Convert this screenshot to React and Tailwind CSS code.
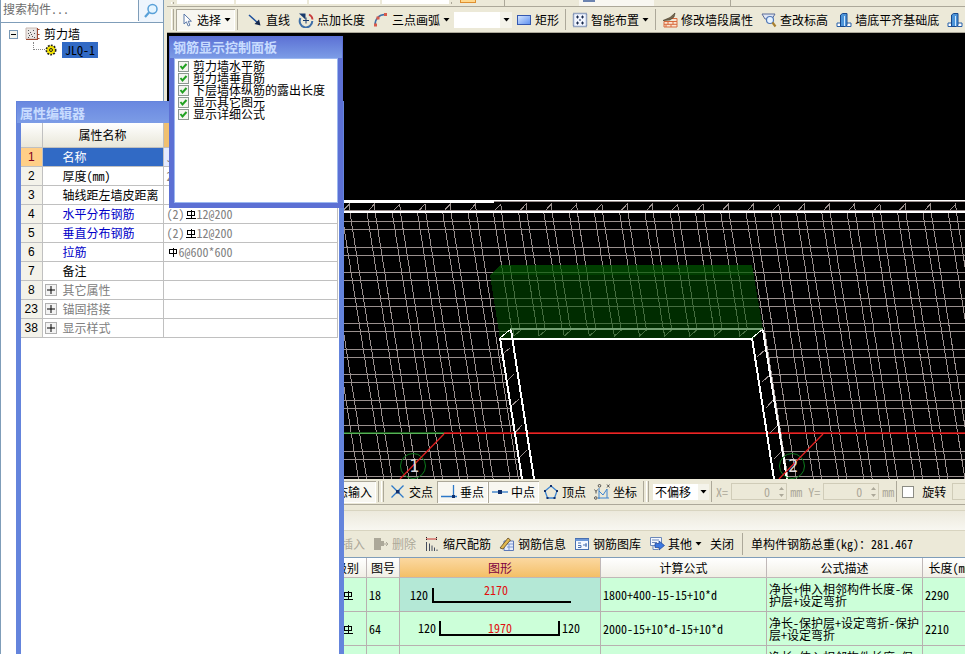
import { useState } from "react";

const GRID = "#9a908e";
const STEP = 25.27;

const range = (from, to) => Array.from({ length: to - from }, (_, i) => from + i);

const Icon = ({ children, size = 16 }) => (
    <svg width={size} height="16" viewBox={`0 0 ${size} 16`} className="shrink-0" fill="none" aria-hidden="true">
        {children}
    </svg>
);

const Arrow = () => (
    <svg width="7" height="4" viewBox="0 0 7 4" className="shrink-0" aria-hidden="true">
        <path d="M0.5 0h6l-3 3.5z" fill="#000" />
    </svg>
);

const Separator = () => <div className="w-px shrink-0 self-stretch bg-[#aca899] my-0.5 mx-0.5" />;

const Grip = () => <div className="w-[3px] shrink-0 self-stretch border-l border-[#fff] border-r border-r-[#aca899] my-0.5" />;

const ToolButton = ({ icon, label, arrow, pressed, disabled }) => (
    <button
        type="button"
        disabled={disabled}
        className={
            "flex h-[22px] shrink-0 items-center gap-[3px] px-1 whitespace-nowrap " +
            (pressed ? "bg-[#f8f7f1] shadow-[inset_1px_1px_0_#aca899,inset_-1px_-1px_0_#fff] " : "") +
            (disabled ? "text-[#aca899]" : "text-black")
        }
    >
        {icon}
        {label}
        {arrow && <Arrow />}
    </button>
);

/* ---------- icons ---------- */

const PointerIcon = () => (
    <Icon size={14}>
        <path d="M4 2v10l2.4-2.2L8.2 14l1.7-.8L8.200 9.200h3.200z" fill="#fff" stroke="#5a78a8" />
    </Icon>
);
const LineIcon = () => (
    <Icon>
        <path d="M2 3L12 12" stroke="#1c4f9c" strokeWidth="1.5" />
        <path d="M13.500 13.500l-6-1.500 4.500-4.500z" fill="#16284c" />
    </Icon>
);
const RotateIcon = () => (
    <Icon>
        <path d="M2.500 6A6.300 6.300 0 1 0 14.300 9" stroke="#3d6ea8" strokeWidth="2" />
        <path d="M11 2.500a6 6 0 0 1 3.500 5" stroke="#c83c3c" strokeWidth="1.800" />
        <path d="M1 1.500h6.500v6z" fill="#183a6c" />
        <path d="M8 5.500v6M5 8.500h6" stroke="#183a6c" />
    </Icon>
);
const ArcIcon = () => (
    <Icon>
        <path d="M2 13C2 7 6 2.500 12 2.500" stroke="#3f6fa8" strokeWidth="1.500" />
        <path d="M1 11.500h3v3H1zM3.500 4.500h3v3h-3zM11 1h3v3h-3z" fill="#d85a4c" />
    </Icon>
);
const RectIcon = () => (
    <Icon>
        <defs>
            <linearGradient id="rectFill" x1="0" y1="0" x2="1" y2="1">
                <stop offset="0" stopColor="#d8e8ff" />
                <stop offset="1" stopColor="#5c8ff0" />
            </linearGradient>
        </defs>
        <rect x="1.500" y="3.500" width="13" height="9" fill="url(#rectFill)" stroke="#3458b0" />
    </Icon>
);
const LayoutIcon = () => (
    <Icon>
        <rect x="1.500" y="1.500" width="13" height="13" fill="#f2f6ff" stroke="#3c5c98" strokeWidth="1.500" strokeDasharray="1 1" />
        <path d="M5.500 3.500v3M4 5h3M10.500 3.500v3M9 5h3M5.500 9.500v3M4 11h3M10.500 9.500v3M9 11h3M8 7v2" stroke="#16284c" />
    </Icon>
);
const BrickIcon = () => (
    <Icon>
        <path d="M2 9.500h13v5.500H2zM2 12.300h13M6 9.500v3M11 9.500v3M4 12.500v2.500M9 12.500v2.500M8 6.500h7v3" stroke="#d86a3c" fill="#fbe3d0" />
        <path d="M1 8.500l7-3 5-4.500-1 4-4 3z" fill="#7a6a50" stroke="#3c3424" strokeWidth=".6" />
    </Icon>
);
const FindLevelIcon = () => (
    <Icon>
        <path d="M1 2h13l-3 5H4z" fill="#dfe6f4" stroke="#5c6c98" />
        <circle cx="9" cy="8" r="3.500" fill="#e8f4ff" stroke="#5078b8" strokeWidth="1.200" />
        <path d="M11.500 10.500l3 4" stroke="#a88030" strokeWidth="2.200" />
    </Icon>
);
const WallIcon = () => (
    <Icon>
        <path d="M1 11h5v3.500H1zM10.500 11H15v3.500h-4.500z" fill="#fff" stroke="#2860a8" />
        <path d="M4.500 3l2-1.500H11v12l-1.500 1H4.500z" fill="#4c94d8" stroke="#18488c" />
        <path d="M8.500 4v10" stroke="#d0e8ff" />
    </Icon>
);
const CrossIcon = () => (
    <Icon>
        <path d="M1.500 1.500l12 12M13.500 1.500l-12 12" stroke="#2c78c8" strokeWidth="1.300" />
        <rect x="6" y="6" width="3.500" height="3.500" fill="#10306c" />
    </Icon>
);
const PerpIcon = () => (
    <Icon>
        <path d="M0 12.500h16M12.500 1v12" stroke="#2c78c8" strokeWidth="1.300" />
        <rect x="11" y="11" width="3" height="3" fill="#10306c" />
    </Icon>
);
const MidIcon = () => (
    <Icon>
        <path d="M0 8h16" stroke="#2c78c8" strokeWidth="1.300" />
        <rect x="6" y="6" width="4" height="4" fill="#10306c" />
    </Icon>
);
const VertexIcon = () => (
    <Icon>
        <path d="M8 2L14 7l-2.500 7h-7L2 7z" stroke="#3c84d0" strokeWidth="1.300" />
        <path d="M7 1h2v2H7zM1 6h2v2H1zM13 6h2v2h-2zM3.500 13h2v2h-2zM10.500 13h2v2h-2z" fill="#10306c" />
    </Icon>
);
const CoordIcon = () => (
    <Icon>
        <path d="M5 4v11M4 14h11M5 7l4 4 4-6v9" stroke="#3c84d0" />
        <circle cx="5.500" cy="1.800" r="1.300" stroke="#333" strokeWidth=".8" />
        <circle cx="1.800" cy="14" r="1.300" stroke="#333" strokeWidth=".8" />
        <path d="M13 .5l2.500 3M15.500 .5l-2.500 3M.5 5.500l1.500 2 1.500-2M2 7.500V9.500" stroke="#333" strokeWidth=".8" />
    </Icon>
);
const DeleteRowIcon = () => (
    <Icon>
        <path d="M1 2h7v3h3v5H8v4H1z" fill="#aca899" />
        <path d="M10 8h5M13 6l2 2-2 2" stroke="#aca899" />
    </Icon>
);
const ScaleIcon = () => (
    <Icon>
        <path d="M2 3h11" stroke="#c83030" />
        <path d="M2.500 1v4M12.500 1v4" stroke="#222" strokeDasharray="1 1" />
        <path d="M2.500 6v9M5.500 7.500V15M8 9.500V15M10.500 11.500V15M13 13.500V15" stroke="#444c5c" />
    </Icon>
);
const InfoIcon = () => (
    <Icon>
        <path d="M5 5h9.500v9.500H5z" fill="#e4ecfc" stroke="#5c78b8" />
        <path d="M8 8h6M8 11h6M10 8v6" stroke="#7c98d0" />
        <path d="M1 12L9 2l2.500 2L4 13z" fill="#e0b850" stroke="#5c4420" strokeWidth=".8" />
    </Icon>
);
const LibraryIcon = () => (
    <Icon>
        <rect x="1.500" y="2.500" width="13" height="11" fill="#f4f8ff" stroke="#4870b0" />
        <path d="M1.500 4h13" stroke="#6c98d8" strokeWidth="2" />
        <path d="M4 7h3M4 9.500h3v2H4M9 9h4M12 7v4" stroke="#4870b0" />
    </Icon>
);
const OtherIcon = () => (
    <Icon>
        <path d="M1.500 1.500h11v8h-11zM4 9.500v4h5" fill="#f4f8ff" stroke="#6c88b8" />
        <path d="M3 4h7M3 6.500h5" stroke="#6c88b8" />
        <path d="M6 7.500h4V5l5.500 4.500L10 14v-2.500H6z" fill="#3c78e0" stroke="#1c4494" strokeWidth=".7" />
    </Icon>
);
const WallTypeIcon = () => (
    <svg width="15" height="14" viewBox="0 0 15 14" className="shrink-0" aria-hidden="true">
        <path d="M1 1h11v11H1z" fill="#eae6e4" stroke="#c8b8b0" />
        <path d="M12.500 1v12M12 2.500h2.500M12 7.500h2.500M12 11.500h2.500M1 12.500h12" stroke="#a04830" fill="none" />
        <path d="M3 3.500h1M8 3.500h1M5 5.500h1M9 6.500h1M4 8.500h1M7 9.500h1M6 7.500h1M9 10.500h1M3 6.500h1M3 10.500h1" stroke="#555" />
    </svg>
);
const GearIcon = () => (
    <svg width="12" height="12" viewBox="0 0 12 12" className="shrink-0" aria-hidden="true">
        <circle cx="6" cy="6" r="4.600" fill="#f4e400" stroke="#222" strokeWidth="1.800" strokeDasharray="1.800 1.200" />
        <circle cx="6" cy="6" r="3.600" fill="#f4e400" />
        <circle cx="6" cy="6" r="1.500" fill="#f4e400" stroke="#222" />
    </svg>
);

/* rebar grade mark: plain for HPB, with a base line for HRB */
const RebarMark = ({ based }) => (
    <svg width="10" height="11" viewBox="0 0 10 11" className="mx-px inline shrink-0 align-[-1px]" fill="none" stroke="#000" shapeRendering="crispEdges" aria-hidden="true">
        <path d={based ? "M1.500 2.500h7v4h-7zM5 .5v9M0 9.500h10" : "M1.500 2.500h7v4h-7zM5 .5v9"} />
    </svg>
);

/* ---------- left side ---------- */

const ComponentTree = () => (
    <aside className="flex w-[164px] shrink-0 flex-col border-r border-l border-[#7f9db9] bg-white">
        <div className="flex h-[23px] border-b border-[#7f9db9]">
            <input
                type="text"
                aria-label="搜索构件"
                placeholder="搜索构件..."
                className="mb-px min-w-0 flex-1 border-r border-[#7f9db9] px-0.5 pb-1 placeholder:text-[#6d6d6d]"
            />
            <button type="button" aria-label="搜索" className="flex w-6 items-center justify-center bg-[#eef5fd]">
                <Icon>
                    <circle cx="9.500" cy="6" r="4.500" fill="#e4f4ff" stroke="#58a0d8" strokeWidth="1.500" />
                    <path d="M6 9.500L2 14" stroke="#58a0d8" strokeWidth="2.200" />
                </Icon>
            </button>
        </div>
        <ul className="pt-[3px] pl-2">
            <li>
                <div className="flex h-4 items-center">
                    <button type="button" aria-label="折叠" className="mr-[7px] h-[9px] w-[9px] border border-[#7898b5] bg-[#f4f4ee] p-px">
                        <span className="block h-px bg-black" />
                    </button>
                    <WallTypeIcon />
                    <span className="ml-1">剪力墙</span>
                </div>
                <div className="ml-6 flex h-4 items-center">
                    <span className="h-2 w-3 self-start border-b border-l border-dotted border-[#888]" />
                    <GearIcon />
                    <a href="#jlq-1" className="ml-[5px] bg-[#316ac5] px-[3px] leading-4 text-black">JLQ-1</a>
                </div>
            </li>
        </ul>
    </aside>
);

const properties = [
    { no: 1, name: "名称", value: "JLQ-1", selected: true },
    { no: 2, name: "厚度(mm)", value: "200" },
    { no: 3, name: "轴线距左墙皮距离" },
    { no: 4, name: "水平分布钢筋", link: true, prefix: "(2)", based: true, value: "12@200" },
    { no: 5, name: "垂直分布钢筋", link: true, prefix: "(2)", based: true, value: "12@200" },
    { no: 6, name: "拉筋", link: true, based: false, value: "6@600*600" },
    { no: 7, name: "备注" },
    { no: 8, name: "其它属性", group: true },
    { no: 23, name: "锚固搭接", group: true },
    { no: 38, name: "显示样式", group: true },
];

const PropertyRow = ({ row }) => {
    let color = "text-black";
    if (row.selected) color = "bg-[#316ac5] text-white";
    else if (row.link) color = "text-[#0000c8]";
    else if (row.group) color = "text-[#808080]";

    return (
        <tr className="h-[19px]">
            <td
                className={
                    "border-r border-b border-[#c0c0c0] text-center font-['Liberation_Sans',sans-serif] " +
                    (row.selected ? "bg-[#ffcf87] text-[#800020]" : "bg-[#f3f2ea]")
                }
            >
                {row.no}
            </td>
            <td className={"border-r border-b border-[#c0c0c0] whitespace-nowrap " + color}>
                <div className="flex items-center pl-0.5">
                    <span className="w-[18px]">
                        {row.group && (
                            <button type="button" aria-label={"展开" + row.name} className="flex h-3 w-3 items-center justify-center border border-[#b0b0b0] bg-[#f3f3f3]">
                                <svg width="8" height="8" viewBox="0 0 8 8" aria-hidden="true">
                                    <path d="M0 4h8M4 0v8" stroke="#000" />
                                </svg>
                            </button>
                        )}
                    </span>
                    {row.name}
                </div>
            </td>
            <td className={"border-r border-b border-[#c0c0c0] pl-[3px] whitespace-nowrap text-[#808080] " + (row.selected ? "bg-[#e3eaff]" : "")}>
                {row.prefix}
                {row.based !== undefined && <RebarMark based={row.based} />}
                {row.value}
            </td>
        </tr>
    );
};

const PropertyEditor = () => (
    <section className="absolute top-[101px] bottom-0 left-4 flex w-[328px] flex-col border-x-[5px] border-t border-[#6484dc] bg-white">
        <h2 className="-mx-1 flex h-[21px] shrink-0 items-center bg-linear-to-b from-[#6a88e0] to-[#7c9ce6] pl-[3px] text-[13px] font-bold text-[#c8dcff]">
            属性编辑器
        </h2>
        <table className="w-[317px] table-fixed border-collapse leading-4">
            <colgroup>
                <col className="w-[21px]" />
                <col className="w-[121px]" />
                <col />
            </colgroup>
            <thead>
                <tr className="h-[24px] bg-linear-to-b from-white to-[#e9e7d9]">
                    <th className="border-r border-b border-[#c0c0c0]"></th>
                    <th className="border-r border-b border-[#c0c0c0] font-normal">属性名称</th>
                    <th className="border-b border-[#c0c0c0] bg-[#f0c070] font-normal">属性值</th>
                </tr>
            </thead>
            <tbody>
                {properties.map((row) => (
                    <PropertyRow key={row.no} row={row} />
                ))}
            </tbody>
        </table>
    </section>
);

const displayOptions = ["剪力墙水平筋", "剪力墙垂直筋", "下层墙体纵筋的露出长度", "显示其它图元", "显示详细公式"];

const DisplayPanel = () => {
    const [shown, setShown] = useState(displayOptions);

    const toggle = (name) =>
        setShown(shown.includes(name) ? shown.filter((n) => n !== name) : [...shown, name]);

    return (
        <section className="absolute top-9 left-[169px] flex h-[172px] w-[174px] flex-col border-x-[5px] border-b-[5px] border-[#5c70d4] bg-[#7c9ce6]">
            <h2 className="-mx-1 flex h-[22px] shrink-0 items-center bg-linear-to-b from-[#5c70d4] to-[#7c9ce6] pl-[3px] text-[13px] font-bold whitespace-nowrap text-[#c8dcff]">
                钢筋显示控制面板
            </h2>
            <div className="flex-1 border border-[#9cb8f0] bg-white px-[3px] pt-px">
                {displayOptions.map((name) => (
                    <label key={name} className="flex h-3 items-center gap-1 leading-3 whitespace-nowrap">
                        <span className="grid">
                            <input
                                type="checkbox"
                                checked={shown.includes(name)}
                                onChange={() => toggle(name)}
                                className="peer col-start-1 row-start-1 h-[11px] w-[11px] appearance-none border border-[#8c9890] bg-[#f4f4f0]"
                            />
                            <svg width="11" height="11" viewBox="0 0 11 11" className="pointer-events-none invisible col-start-1 row-start-1 peer-checked:visible" aria-hidden="true">
                                <path d="M2.500 5l2 2.500L8.500 3" fill="none" stroke="#21a121" strokeWidth="2" />
                            </svg>
                        </span>
                        {name}
                    </label>
                ))}
            </div>
        </section>
    );
};

/* ---------- 3D view ---------- */

const leftTies = [[500, 356, 510, 348], [506, 382, 514, 374], [510, 407, 519, 399], [515, 433, 522, 425], [519, 458, 527, 450]];
const rightTies = [[757, 357, 766, 349], [762, 382, 771, 374], [766, 408, 774, 399], [770, 433, 778, 425], [774, 459, 782, 451]];

const AxisMark = ({ x, label }) => (
    <g shapeRendering="auto">
        <circle cx={x} cy="466" r="12.500" stroke="#0c7c1c" />
        <path d={`M${x + 31} 434L${x - 13} 479`} stroke="#e02020" strokeWidth="1.300" />
        <text x={x + 1} y="472" textAnchor="middle" fontSize="17" fill="#d8d8d8" stroke="none" fontFamily="DejaVu Sans Mono, monospace">
            {label}
        </text>
    </g>
);

const RebarView = () => (
    <div className="min-h-0 flex-1 bg-black">
        <svg viewBox="167 33 798 446" preserveAspectRatio="xMinYMin slice" className="h-full w-full" fill="none" shapeRendering="crispEdges">
            <g stroke={GRID}>
                {range(0, 11).map((k) => (
                    <path key={k} d={`M167 ${Math.round(221 + 25.5 * k) + 0.5}H965M167 ${Math.round(229 + 25.5 * k) + 0.5}H965`} />
                ))}
                {range(-3, 24).map((k) => {
                    const x = 367 + STEP * k;
                    return <path key={k} d={`M${x} 213l42 266M${x + 8.3} 213l42 266`} />;
                })}
                {range(-1, 24).map((k) => {
                    const x = 369 + STEP * k;
                    return <path key={k} d={`M${x} 210l5.500 -6l.5 6`} />;
                })}
            </g>
            <path d="M167 201.500H494" stroke="#fff" strokeWidth="3" />
            <path d="M494 200.500H965" stroke="#fff" />
            <path d="M494 201.500H965M167 210.500H965" stroke={GRID} />
            <path d="M167 212H965" stroke="#fff" strokeWidth="2" />

            <path d="M500 338L511 329H763L787 479H522z" fill="#000" />
            <rect x="167" y="432" width="277" height="1" fill="#1c5c1c" />
            <rect x="167" y="433" width="277" height="1" fill="#58b058" />
            <rect x="444" y="432" width="521" height="1" fill="#a01010" />
            <rect x="444" y="433" width="521" height="1" fill="#e82828" />

            <g stroke={GRID}>
                {[...leftTies, ...rightTies].map(([x1, y1, x2, y2]) => (
                    <path key={`${x1}-${y1}`} d={`M${x1} ${y1}L${x2} ${y2}`} />
                ))}
                {range(0, 10).map((k) => (
                    <path key={k} d={`M${513 + 25.1 * k} 330l1 6l7 -6`} />
                ))}
            </g>
            <path d="M510 329H763" stroke="#fff" strokeWidth="2" />
            <path d="M490 275L500 265H752L763 330L753 339H500z" fill="#005000" fillOpacity=".55" />
            <path d="M490 275L500 265H752L754 275z" fill="#006000" fillOpacity=".35" />

            <g stroke="#fff" strokeWidth="2">
                <path d="M500 338L522 479M511 330L534 479M752 338L774 479M763 330L787 479" />
                <path d="M500 339H753" />
                <path d="M500 338L511 329M752 338L763 329" strokeWidth="1" />
            </g>
            <AxisMark x={413} label="1" />
            <AxisMark x={792} label="2" />
        </svg>
    </div>
);

/* ---------- toolbars ---------- */

const CommonBar = () => (
    <div className="flex h-[7px] shrink-0 overflow-hidden border-b border-[#aca899] pl-1">
        <Grip />
        <div className="ml-[3px] h-1 w-[57px] bg-white" />
        <div className="ml-0.5 h-1 w-[71px] bg-white" />
        <div className="ml-0.5 h-1 w-[71px] bg-white" />
        <div className="ml-0.5 h-1 w-[67px] bg-white" />
        <Separator />
        <div className="ml-1.5 h-[3px] w-4 border-x border-b border-[#e09030] bg-[#ffd88c]" />
        <div className="ml-7 w-px bg-[#aca899]" />
        <div className="ml-[74px] h-1.5 w-[75px] bg-[#f8f7f1]">
            <div className="ml-1 h-0.5 w-3 bg-[#6c84b0]" />
        </div>
        <div className="ml-[76px] w-px bg-[#aca899]" />
    </div>
);

const DrawBar = () => (
    <div className="flex h-[26px] shrink-0 items-center overflow-hidden border-b border-[#aca899] pl-1">
        <Grip />
        <div className="w-0.5 shrink-0" />
        <ToolButton icon={<PointerIcon />} label="选择" arrow pressed />
        <Separator />
        <div className="w-[3px] shrink-0" />
        <ToolButton icon={<LineIcon />} label="直线" />
        <ToolButton icon={<RotateIcon />} label="点加长度" />
        <ToolButton icon={<ArcIcon />} label="三点画弧" arrow />
        <span className="grid shrink-0 items-center">
            <select aria-label="画弧方式" className="col-start-1 row-start-1 h-4 w-[58px] appearance-none bg-white">
                <option></option>
            </select>
            <span className="pointer-events-none col-start-1 row-start-1 flex h-4 w-3 items-center justify-center justify-self-end bg-[#f4f3ea]">
                <Arrow />
            </span>
        </span>
        <ToolButton icon={<RectIcon />} label="矩形" />
        <Separator />
        <ToolButton icon={<LayoutIcon />} label="智能布置" arrow />
        <Separator />
        <ToolButton icon={<BrickIcon />} label="修改墙段属性" />
        <ToolButton icon={<FindLevelIcon />} label="查改标高" />
        <ToolButton icon={<WallIcon />} label="墙底平齐基础底" />
        <ToolButton icon={<WallIcon />} label="" />
    </div>
);

const OffsetField = ({ axis }) => (
    <label className="flex shrink-0 items-center gap-[3px] text-[#aca899]">
        {axis}=
        <span className="flex h-[17px] w-14 items-center border border-[#d0ccb8]">
            <input type="text" disabled defaultValue="0" className="w-[38px] min-w-0 text-right" />
            <svg width="7" height="12" viewBox="0 0 7 12" className="ml-2 shrink-0" fill="#aca899" aria-hidden="true">
                <path d="M1 4h5L3.500 1zM1 8h5L3.500 11z" />
            </svg>
        </span>
        mm
    </label>
);

const SnapBar = () => (
    <div className="flex h-[26px] shrink-0 items-center overflow-hidden border-b border-[#aca899] pl-[134px]">
        <ToolButton icon={<CrossIcon />} label="动态输入" pressed />
        <Separator />
        <Grip />
        <div className="w-0.5 shrink-0" />
        <ToolButton icon={<CrossIcon />} label="交点" />
        <ToolButton icon={<PerpIcon />} label="垂点" pressed />
        <ToolButton icon={<MidIcon />} label="中点" pressed />
        <ToolButton icon={<VertexIcon />} label="顶点" />
        <ToolButton icon={<CoordIcon />} label="坐标" />
        <Separator />
        <Grip />
        <span className="ml-1 grid shrink-0 items-center">
            <select aria-label="偏移方式" className="col-start-1 row-start-1 h-4 w-14 appearance-none bg-white pl-0.5">
                <option>不偏移</option>
            </select>
            <span className="pointer-events-none col-start-1 row-start-1 flex h-4 w-[11px] items-center justify-center justify-self-end bg-[#f4f3ea]">
                <Arrow />
            </span>
        </span>
        <Separator />
        <div className="ml-0.5 flex shrink-0 gap-1.5">
            <OffsetField axis="X" />
            <OffsetField axis="Y" />
        </div>
        <Separator />
        <label className="ml-[3px] flex shrink-0 items-center gap-2">
            <input type="checkbox" className="h-3 w-3 appearance-none border border-[#8c8c84] bg-white" />
            旋转
        </label>
        <input type="text" disabled aria-label="旋转角度" className="ml-1.5 h-[17px] w-14 shrink-0 border border-[#d0ccb8]" />
    </div>
);

const RebarBar = () => (
    <div className="flex h-7 shrink-0 items-center overflow-hidden border-t border-b border-t-[#d8d4c0] border-b-[#7f9db9] pl-[151px]">
        <ToolButton icon={<DeleteRowIcon />} label="插入" disabled />
        <ToolButton icon={<DeleteRowIcon />} label="删除" disabled />
        <ToolButton icon={<ScaleIcon />} label="缩尺配筋" />
        <ToolButton icon={<InfoIcon />} label="钢筋信息" />
        <ToolButton icon={<LibraryIcon />} label="钢筋图库" />
        <ToolButton icon={<OtherIcon />} label="其他" arrow />
        <ToolButton label="关闭" />
        <div className="w-0.5 shrink-0" />
        <Separator />
        <span className="ml-1.5 whitespace-nowrap">单构件钢筋总重(kg)：281.467</span>
    </div>
);

/* ---------- rebar table ---------- */

const rebars = [
    {
        id: 1,
        size: 18,
        path: "M34 9v14h138",
        labels: [[11, 21, "120"]],
        length: [85, 16, "2170"],
        formula: "1800+400-15-15+10*d",
        note: "净长+伸入相邻构件长度-保护层+设定弯折",
        total: 2290,
        selected: true,
    },
    {
        id: 2,
        size: 64,
        path: "M41 8v14h119v-14",
        labels: [[19, 20, "120"], [163, 20, "120"]],
        length: [89, 20, "1970"],
        formula: "2000-15+10*d-15+10*d",
        note: "净长-保护层+设定弯折-保护层+设定弯折",
        total: 2210,
    },
    { id: 3, note: "净长+伸入相邻构件长度-保护层+设定弯折" },
];

const th = "border-r border-b border-[#c0b8b8] font-normal whitespace-nowrap";
const td = "h-[34px] border-r border-b border-[#b8b0b0] p-0 pl-0.5";

const RebarTable = () => (
    <div className="h-24 shrink-0 overflow-hidden bg-white">
        <table className="w-full min-w-[816px] table-fixed border-separate border-spacing-0 bg-[#ccffd9]">
            <colgroup>
                <col className="w-[161px]" />
                <col className="w-[39px]" />
                <col className="w-[33px]" />
                <col className="w-[201px]" />
                <col className="w-[166px]" />
                <col className="w-[156px]" />
                <col />
            </colgroup>
            <thead>
                <tr className="h-5 bg-linear-to-b from-white to-[#f0eee4]">
                    <th className={th}></th>
                    <th className={th}>级别</th>
                    <th className={th}>图号</th>
                    <th className={th + " bg-linear-to-b from-[#fbd8a0] to-[#f4bf66] text-[#800040]"}>图形</th>
                    <th className={th}>计算公式</th>
                    <th className={th}>公式描述</th>
                    <th className={th}>长度(mm)</th>
                </tr>
            </thead>
            <tbody>
                {rebars.map((r) => (
                    <tr key={r.id}>
                        <td className={td}></td>
                        <td className={td + " text-center"}>
                            <RebarMark based />
                        </td>
                        <td className={td}>{r.size}</td>
                        <td className={td + (r.selected ? " bg-[#b4e8d6]" : "")}>
                            {r.path && (
                                <svg width="196" height="32" viewBox="3 0 196 32" className="block" fontSize="12">
                                    <path d={r.path} fill="none" stroke="#000" strokeWidth="2" />
                                    {r.labels.map(([x, y, text]) => (
                                        <text key={x} x={x} y={y}>{text}</text>
                                    ))}
                                    <text x={r.length[0]} y={r.length[1]} fill="#e01010">{r.length[2]}</text>
                                </svg>
                            )}
                        </td>
                        <td className={td}>{r.formula}</td>
                        <td className={td + " leading-3 break-all"}>{r.note}</td>
                        <td className={td}>{r.total}</td>
                    </tr>
                ))}
            </tbody>
        </table>
    </div>
);

const App = () => (
    <div className="relative flex h-screen overflow-hidden bg-[#ece9d8] font-['Noto_Sans_Mono_CJK_SC','Noto_Sans_CJK_SC',sans-serif] text-xs text-black">
        <ComponentTree />
        <main className="ml-[3px] flex min-w-0 flex-1 flex-col">
            <CommonBar />
            <DrawBar />
            <RebarView />
            <SnapBar />
            <div className="mt-[5px] h-5 shrink-0 border-t border-[#d8d4c0] bg-linear-to-b from-[#ece9dc] to-[#f8f7f1]" />
            <RebarBar />
            <RebarTable />
        </main>
        <PropertyEditor />
        <DisplayPanel />
    </div>
);

export default App;
